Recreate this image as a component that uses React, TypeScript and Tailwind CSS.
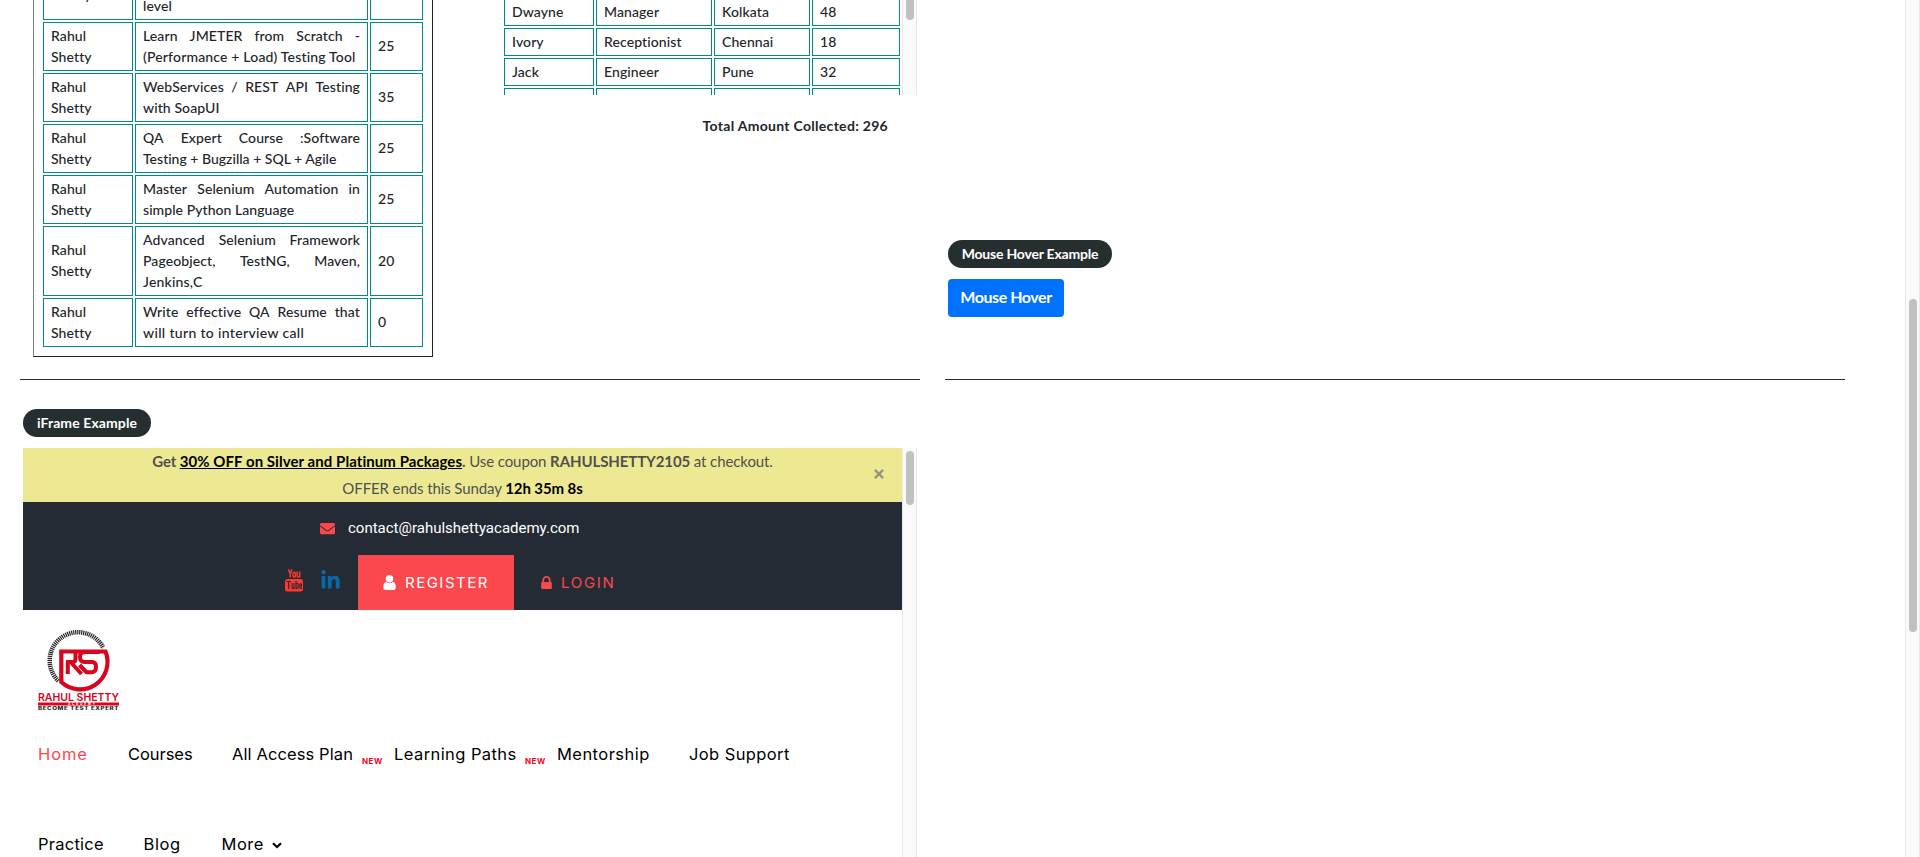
import type { ReactNode } from "react";
import { FaEnvelope, FaLinkedinIn } from "react-icons/fa";

type CourseRow = { text: string[]; price: string; last?: string };

const courses: CourseRow[] = [
  { text: ["WebSecurity Testing for", "Beginners-QA knowledge to next", "level"], price: "20" },
  { text: ["Learn JMETER from Scratch -", "(Performance + Load) Testing Tool"], price: "25", last: "tracking-[0.17px]" },
  { text: ["WebServices / REST API Testing", "with SoapUI"], price: "35" },
  { text: ["QA Expert Course :Software", "Testing + Bugzilla + SQL + Agile"], price: "25", last: "tracking-[0.01px]" },
  { text: ["Master Selenium Automation in", "simple Python Language"], price: "25", last: "tracking-[0.06px]" },
  { text: ["Advanced Selenium Framework", "Pageobject, TestNG, Maven,", "Jenkins,C"], price: "20", last: "tracking-[0.2px]" },
  { text: ["Write effective QA Resume that", "will turn to interview call"], price: "0", last: "tracking-[0.34px]" },
];

const people = [
  ["Dwayne", "Manager", "Kolkata", "48"],
  ["Ivory", "Receptionist", "Chennai", "18"],
  ["Jack", "Engineer", "Pune", "32"],
];

const cell = "flex items-center border border-[#008b8b] pl-[7px] pr-[7px] pt-[1.5px] pb-[3.5px]";

function CourseTable() {
  return (
    <div className="ml-[13px] flex h-[357px] w-[400px] flex-col justify-end overflow-hidden">
      <div className="flex flex-col gap-[2px] border border-[#222] border-l-[#808080] px-[9px] pb-[9px]">
        {courses.map((c) => (
          <div key={c.text[0]} className="grid grid-cols-[90px_233px_53px] gap-[2px]">
            <div className={cell}>
              <div>
                <div>Rahul</div>
                <div>Shetty</div>
              </div>
            </div>
            <div className={cell}>
              <div className="w-full">
                {c.text.map((line, i) =>
                  i < c.text.length - 1 ? (
                    <div key={line} className="flex justify-between whitespace-nowrap">
                      {line.split(" ").map((w, j) => (
                        <span key={j}>{w}</span>
                      ))}
                    </div>
                  ) : (
                    <div key={line} className={`whitespace-nowrap ${c.last ?? ""}`}>
                      {line}
                    </div>
                  ),
                )}
              </div>
            </div>
            <div className={cell}>{c.price}</div>
          </div>
        ))}
      </div>
    </div>
  );
}

function ScrollTrack({ children }: { children?: ReactNode }) {
  return (
    <div className="flex w-[15px] shrink-0 flex-col items-center border-x border-[#e8e8e8] bg-[#fafafa]">{children}</div>
  );
}

function PeopleTable() {
  return (
    <div className="ml-[71px] w-[413px]">
      <div className="flex h-[95px] justify-between overflow-hidden">
        <div className="-mt-[2px] flex flex-col gap-[2px]">
          {people.map((p) => (
            <div key={p[0]} className="grid h-[28px] shrink-0 grid-cols-[90px_116px_96px_88px] gap-[2px]">
              {p.map((v) => (
                <div key={v} className={cell}>
                  {v}
                </div>
              ))}
            </div>
          ))}
          <div className="grid h-[28px] shrink-0 grid-cols-[90px_116px_96px_88px] gap-[2px]">
            <div className={cell} />
            <div className={cell} />
            <div className={cell} />
            <div className={cell} />
          </div>
        </div>
        <ScrollTrack>
          <div className="h-[20px] w-[8px] rounded-b-full bg-[#c1c1c1]" />
        </ScrollTrack>
      </div>
      <div className="mt-[20px] pr-[29px] text-right font-bold tracking-[0.3px]">Total Amount Collected: 296</div>
    </div>
  );
}

function Pill({ children, className }: { children: ReactNode; className: string }) {
  return (
    <div
      className={`flex h-[28px] items-center justify-center whitespace-nowrap rounded-full bg-[#262f2f] pb-[2px] font-bold text-white ${className}`}
    >
      {children}
    </div>
  );
}

function UserIcon() {
  return (
    <svg width="13" height="15" viewBox="0 0 1280 1536" fill="currentColor" className="mr-[9px] shrink-0">
      <path d="M1280 1271q0 109-62.5 187t-150.5 78h-854q-88 0-150.5-78t-62.5-187q0-85 8.5-160.5t31.5-152 58.5-131 94-89 134.5-34.5q131 128 313 128t313-128q76 0 134.5 34.5t94 89 58.5 131 31.5 152 8.5 160.5z" />
      <circle cx="640" cy="384" r="384" />
    </svg>
  );
}

function LockIcon() {
  return (
    <svg width="11" height="13" viewBox="0 128 1152 1408" fill="currentColor" className="mr-[9px] shrink-0">
      <path d="M320 768h512v-192q0-106-75-181t-181-75-181 75-75 181v192zm832 96v576q0 40-28 68t-68 28h-960q-40 0-68-28t-28-68v-576q0-40 28-68t68-28h32v-192q0-184 132-316t316-132 316 132 132 316v192h32q40 0 68 28t28 68z" />
    </svg>
  );
}

function YoutubeStacked() {
  return (
    <svg width="18" height="23" viewBox="0 0 18 23" className="mb-[5px] shrink-0">
      <g fill="none" stroke="#fb3a2d" strokeWidth="1.5">
        <path d="M3.4 .3 5.2 4.7V8.6M7 .3 5.2 4.7" />
        <rect x="8" y="3.2" width="2.4" height="4.8" rx="1.1" />
        <path d="M12.2 2.5V7q0 1 .9 1 .9 0 1.5-.9M14.7 2.5V8.6" />
      </g>
      <rect x="0" y="10" width="18" height="12.5" rx="2.5" fill="#fb3a2d" />
      <g fill="none" stroke="#252b35" strokeWidth="1.1">
        <path d="M1.5 12.5H6M3.7 12.5V20M7 14V18.6q0 .9.7.9.7 0 1.2-.8M9 14V20M11 11.9V20M11 14.9q2.1-1 2.1.6v2.8q0 1.7-2.1.6M16.6 18q0 1.4-.9 1.4-.9 0-.9-1.4V16q0-1.3.9-1.3.9 0 .9 1.3v.8h-1.8" />
      </g>
    </svg>
  );
}

function Logo() {
  return (
    <svg width="82" height="82" viewBox="0 0 82 82">
      <path
        d="M20.300 51.800A28.300 28.300 0 0 1 40 3.200A28.300 28.300 0 0 1 65.300 18.900"
        fill="none"
        stroke="#222"
        strokeWidth="4.600"
        strokeDasharray="1.200 .8"
      />
      <path d="M23.300 22.500H67.500A27.500 27.500 0 0 1 23.300 53Z" fill="none" stroke="#d9051d" strokeWidth="4.200" />
      <g fill="none" stroke="#d9051d" strokeWidth="4">
        <path d="M28 33H34.500Q37.500 33 37.500 30V22M29.800 45V33M33.500 34 43.500 45" />
        <path d="M62 23H46.500Q42 23 42 28 42 33 46.500 33H54Q58 33 58 38 58 43.200 53.500 43.200H48.500L41.500 36" />
      </g>
      <text x="0" y="72.200" textLength="81" lengthAdjust="spacingAndGlyphs" fill="#d9051d" className="font-[Inter] text-[10.5px] font-semibold">
        RAHUL SHETTY
      </text>
      <rect x="0" y="73.500" width="81" height="3" fill="#d9051d" />
      <text x="30" y="76.100" textLength="27" fill="#fff" className="font-[Inter] text-[3px] font-bold">
        ACADEMY
      </text>
      <text x="0" y="80.800" textLength="81" lengthAdjust="spacingAndGlyphs" fill="#222" className="font-[Inter] text-[4.2px] font-extrabold tracking-[0.4px]">
        BECOME TEST EXPERT
      </text>
    </svg>
  );
}

function NavItem({ children, className }: { children: ReactNode; className: string }) {
  return <div className={`shrink-0 whitespace-nowrap ${className}`}>{children}</div>;
}

function NewTag() {
  return <div className="mt-[7px] w-[32px] shrink-0 text-[8px] font-bold tracking-[0.5px] text-[#ff0020]">NEW</div>;
}

function Frame() {
  return (
    <div className="ml-[3px] mt-[11px] flex h-[409px] w-[894px] overflow-hidden font-normal">
      <div className="w-[879px] shrink-0">
        <div className="flex h-[54px] items-center bg-[#ede993] font-[Lato] text-[15px] leading-[27px] tracking-[-0.1px] text-[#505050]">
          <div className="w-[47px]" />
          <div className="flex-1 text-center">
            <div>
              <span className="font-bold">Get </span>
              <span className="font-bold tracking-[0.06px] text-black underline">30% OFF on Silver and Platinum Packages</span>
              <b>.</b> Use coupon <b>RAHULSHETTY2105</b> at checkout.
            </div>
            <div>
              OFFER ends this Sunday <b className="text-black">12h 35m 8s</b>
            </div>
          </div>
          <div className="flex w-[47px] justify-center pb-[2px]">
            <svg width="10" height="10" viewBox="0 0 11 11" stroke="#929287" strokeWidth="2.500">
              <path d="M1 1 10 10M10 1 1 10" />
            </svg>
          </div>
        </div>
        <div className="h-[108px] bg-[#252b35]">
          <div className="flex h-[53px] items-center pl-[297px] font-[Roboto] text-[15px] text-white">
            <FaEnvelope className="mr-[13px] size-[15px] text-[#fb484d]" />
            <span>contact@rahulshettyacademy.com</span>
          </div>
          <div className="flex h-[55px] items-center pl-[262px] font-[Inter] text-[15px]">
            <YoutubeStacked />
            <FaLinkedinIn className="mb-[4px] ml-[17px] size-[21px] text-[#0669a8]" />
            <div className="ml-[17px] flex h-full w-[156px] items-center bg-[#fb484d] pl-[25px] tracking-[1.5px] text-white">
              <UserIcon />
              REGISTER
            </div>
            <div className="flex items-center pl-[27px] tracking-[1.7px] text-[#fb484d]">
              <LockIcon />
              LOGIN
            </div>
          </div>
        </div>
        <div className="pl-[15px] pt-[19px] font-[Inter] text-[16.5px] leading-[24px] text-black">
          <Logo />
          <div className="mt-[31px] flex h-[90px]">
            <NavItem className="w-[90px] tracking-[0.9px] text-[#fb484d]">Home</NavItem>
            <NavItem className="w-[104px] tracking-[-0.05px]">Courses</NavItem>
            <NavItem className="w-[130px] tracking-[0.1px]">All Access Plan</NavItem>
            <NewTag />
            <NavItem className="w-[131px] tracking-[0.42px]">Learning Paths</NavItem>
            <NewTag />
            <NavItem className="w-[132px] tracking-[0.45px]">Mentorship</NavItem>
            <NavItem className="w-[110px] tracking-[0.4px]">Job Support</NavItem>
          </div>
          <div className="flex items-center">
            <NavItem className="w-[105.5px] tracking-[0.25px]">Practice</NavItem>
            <NavItem className="w-[78px] tracking-[0.6px]">Blog</NavItem>
            <NavItem className="w-[50px] tracking-[0.5px]">More</NavItem>
            <svg width="10" height="7" viewBox="0 0 10 7" fill="none" stroke="#000" strokeWidth="2.200" className="mt-[2px]">
              <path d="M1 1.200 5 5 9 1.200" />
            </svg>
          </div>
        </div>
      </div>
      <ScrollTrack>
        <div className="mt-[3px] h-[54px] w-[8px] rounded-full bg-[#c1c1c1]" />
      </ScrollTrack>
    </div>
  );
}

export default function App() {
  return (
    <div className="flex h-[857px] w-[1920px] overflow-hidden bg-white font-[Lato,sans-serif] text-[14px] leading-[21px] font-medium tracking-[0.1px] text-[#212529]">
      <div className="flex flex-1 gap-[25px] pl-[20px]">
        <div className="w-[900px]">
          <div className="flex h-[380px] border-b border-[#262f2f]">
            <CourseTable />
            <PeopleTable />
          </div>
          <Pill className="ml-[3px] mt-[29px] w-[128px]">iFrame Example</Pill>
          <div className="tracking-normal">
            <Frame />
          </div>
        </div>
        <div className="w-[900px]">
          <div className="h-[380px] border-b border-[#262f2f] pl-[3px] pt-[240px]">
            <Pill className="w-[164px] tracking-[-0.2px]">Mouse Hover Example</Pill>
            <button className="mt-[11px] block h-[38px] w-[116px] rounded bg-[#0071ff] pb-[3px] text-[16px] font-bold tracking-[-0.45px] text-white">
              Mouse Hover
            </button>
          </div>
        </div>
      </div>
      <ScrollTrack>
        <div className="mt-[299px] h-[333px] w-[8px] shrink-0 rounded-full bg-[#c1c1c1]" />
      </ScrollTrack>
    </div>
  );
}
